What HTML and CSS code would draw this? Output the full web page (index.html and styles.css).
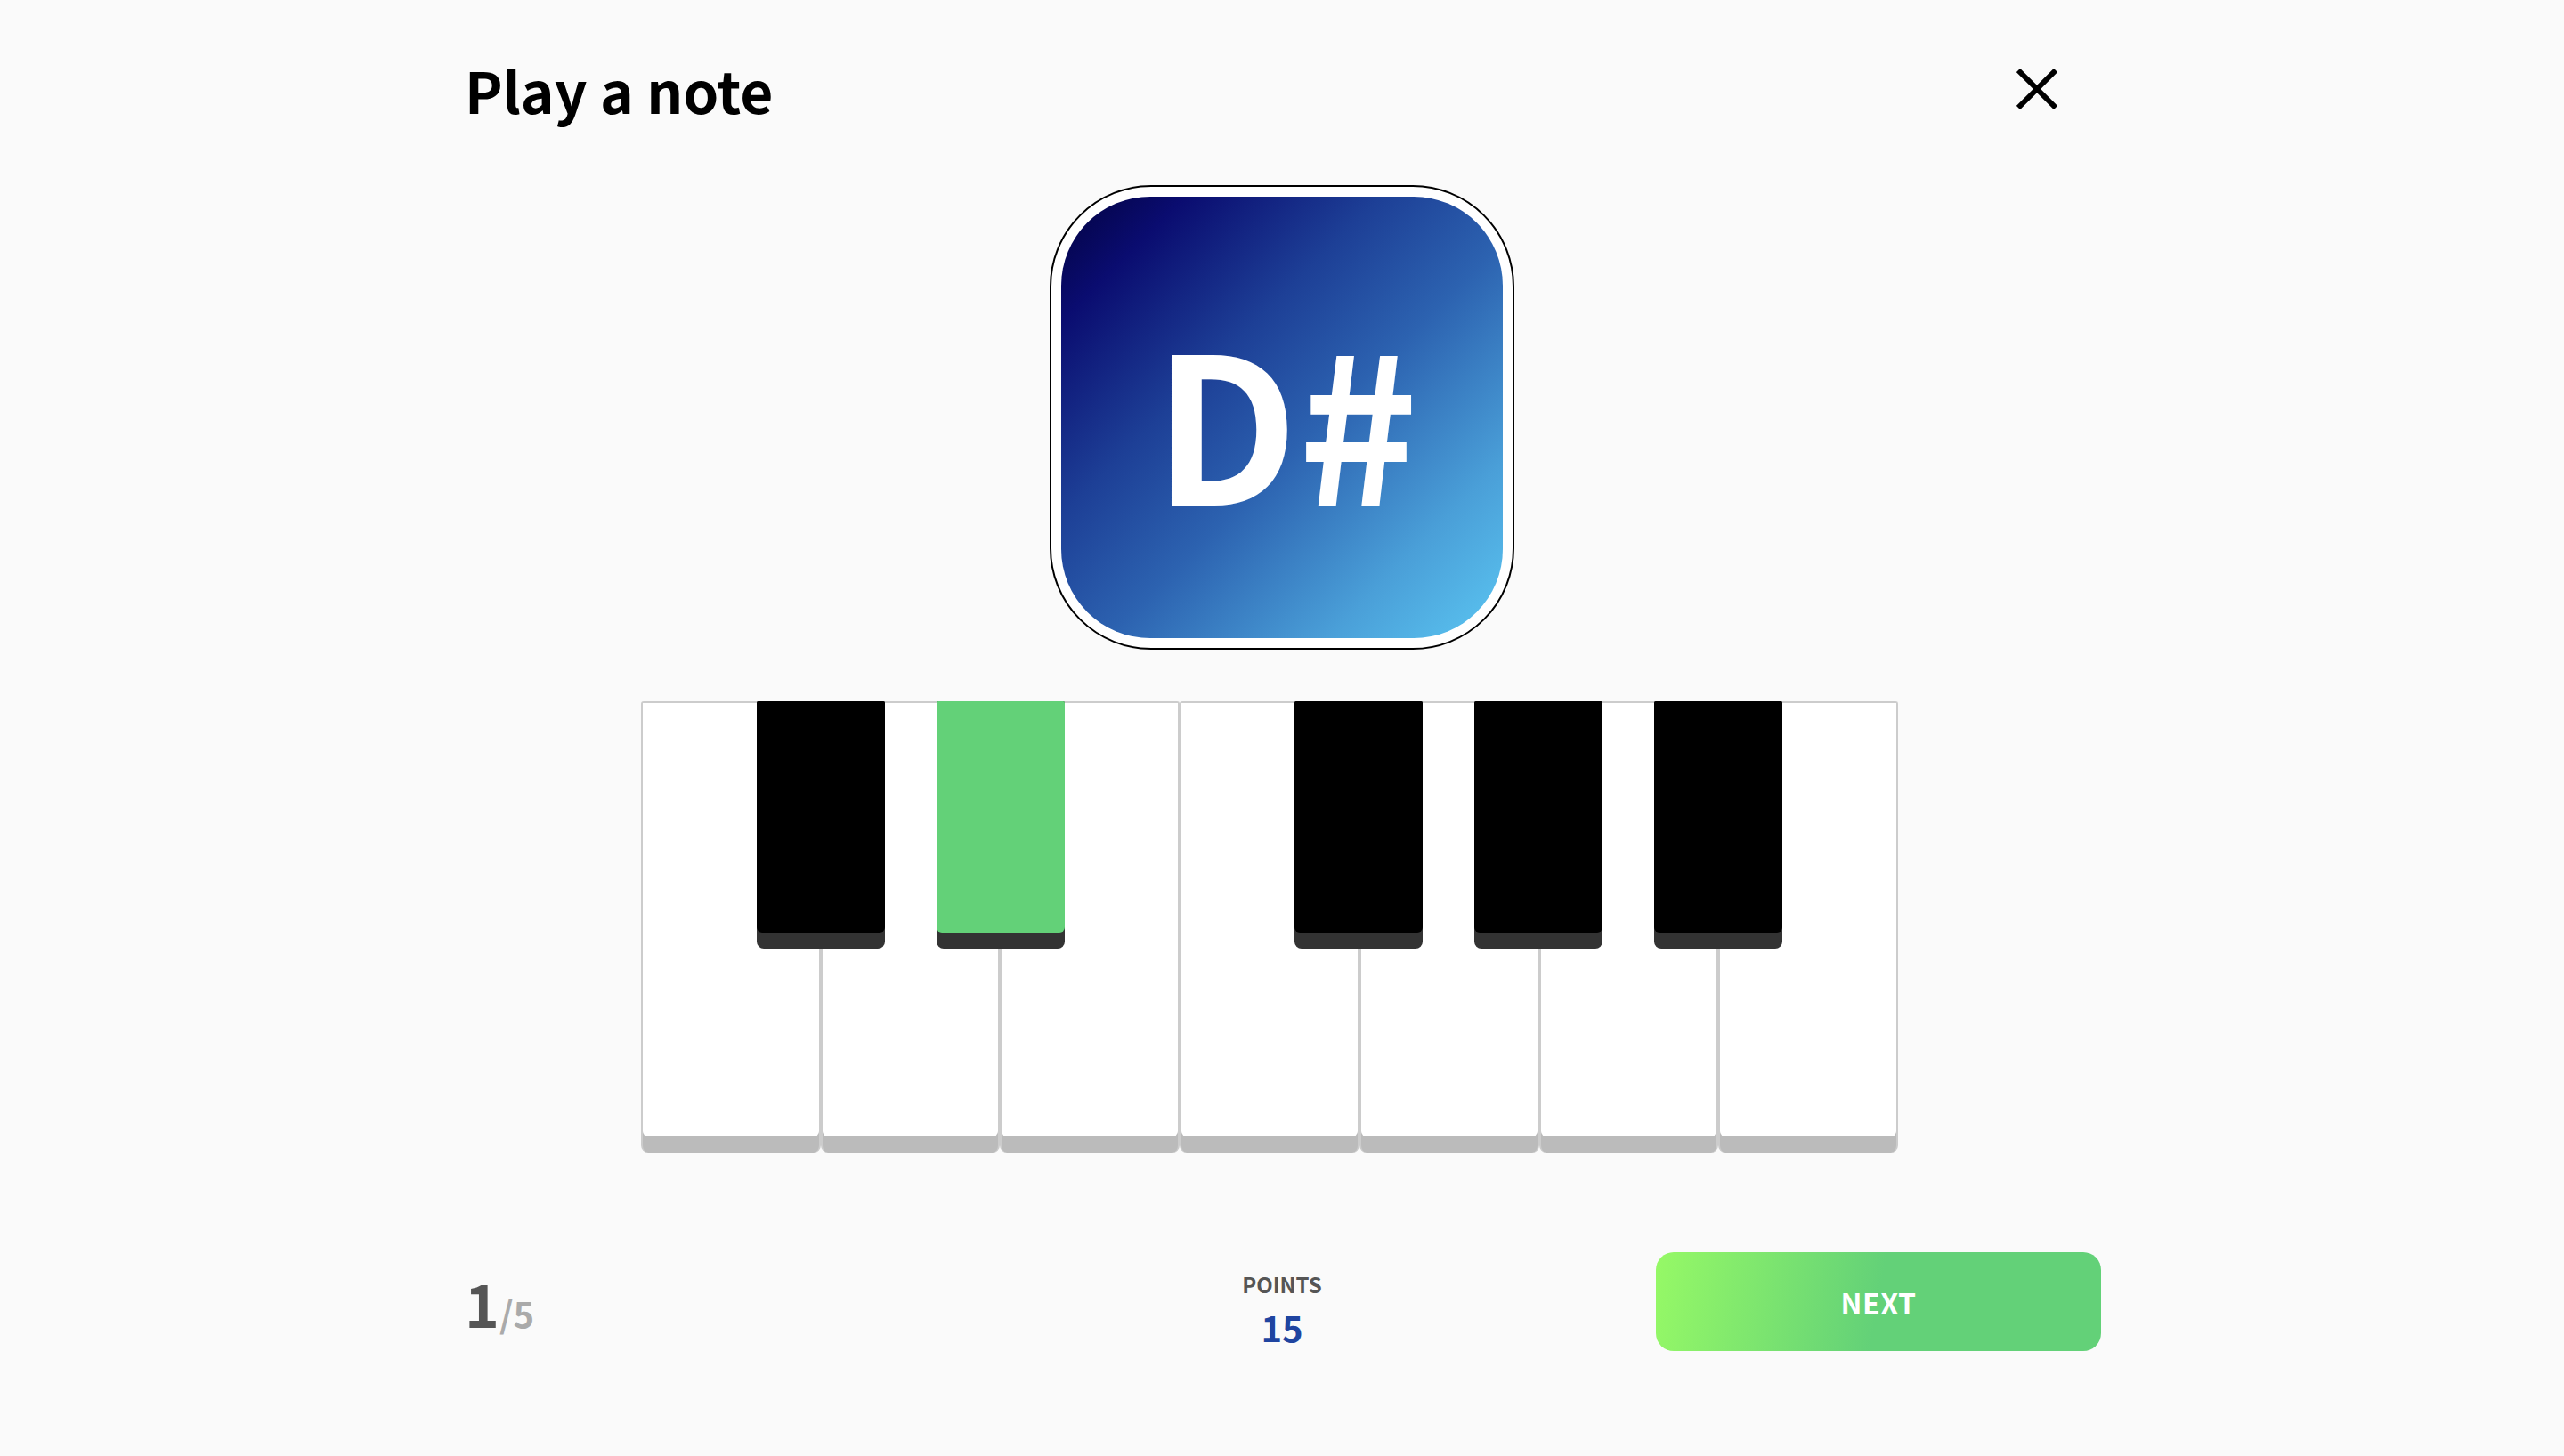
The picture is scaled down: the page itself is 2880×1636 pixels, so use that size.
FILE: index.html
```html
<!DOCTYPE html>
<html lang="en">
<head>
<meta charset="utf-8">
<title>Play a note</title>
<link rel="stylesheet" href="styles.css">
</head>
<body>
<div class="page">
  <header class="header">
    <h1 class="title">Play a note</h1>
    <button class="close" aria-label="Close">
      <svg width="46" height="46" viewBox="0 0 46 46"><path d="M2 2 L44 44 M44 2 L2 44" stroke="#000" stroke-width="6" fill="none"/></svg>
    </button>
  </header>

  <div class="card-wrap">
    <div class="card">
      <div class="card-inner"><span class="note">D#</span></div>
    </div>
  </div>

  <div class="keyboard">
    <div class="wkey"><div class="face"></div></div>
    <div class="wkey"><div class="face"></div></div>
    <div class="wkey"><div class="face"></div></div>
    <div class="wkey"><div class="face"></div></div>
    <div class="wkey"><div class="face"></div></div>
    <div class="wkey"><div class="face"></div></div>
    <div class="wkey"><div class="face"></div></div>
    <div class="bkey bk1"><div class="bface"></div></div>
    <div class="bkey bk2 active"><div class="bface"></div></div>
    <div class="bkey bk3"><div class="bface"></div></div>
    <div class="bkey bk4"><div class="bface"></div></div>
    <div class="bkey bk5"><div class="bface"></div></div>
  </div>

  <footer class="footer">
    <div class="progress"><span class="cur">1</span><span class="total">/5</span></div>
    <div class="points">
      <div class="points-label">POINTS</div>
      <div class="points-value">15</div>
    </div>
    <button class="next">NEXT</button>
  </footer>
</div>
</body>
</html>
```

FILE: styles.css
```css
* { box-sizing: border-box; }
html, body { margin: 0; padding: 0; }
body {
  background: #fafafa;
  font-family: "Noto Sans CJK JP", "Noto Sans", sans-serif;
  color: #000;
}
.page {
  width: 1840px;
  margin: 0 auto;
}
.header {
  display: flex;
  justify-content: space-between;
  align-items: center;
  height: 200px;
}
.title {
  margin: 0 0 0 2px;
  font-size: 64px;
  font-weight: 700;
  line-height: 1;
  color: #000;
}
.close {
  background: none;
  border: 0;
  padding: 0;
  margin-right: 49px;
  width: 46px;
  height: 46px;
  display: flex;
}
.card-wrap {
  display: flex;
  justify-content: center;
  margin-top: 8px;
}
.card {
  width: 522px;
  height: 522px;
  border: 2px solid #000;
  border-radius: 114px;
  background: #fff;
  padding: 11px;
}
.card-inner {
  width: 100%;
  height: 100%;
  border-radius: 100px;
  background: linear-gradient(135deg, #020240 0%, #0a0c70 14%, #1d3f96 36%, #2c62b0 55%, #4a9fd8 80%, #5bc6f2 100%);
  display: flex;
  align-items: center;
  justify-content: center;
}
.note {
  color: #fff;
  font-weight: 700;
  font-size: 228px;
  line-height: 1;
  margin-left: 8px;
}
.keyboard {
  position: relative;
  display: flex;
  width: 1412px;
  height: 507px;
  margin: 58px 0 0 200px;
}
.wkey {
  flex: 1;
  border: 2px solid #cccccc;
  border-bottom: 0;
  border-radius: 3px 3px 8px 8px;
  background: #bbbbbb;
  display: flex;
  flex-direction: column;
}
.face {
  height: 487px;
  background: #fff;
  border-radius: 0 0 6px 6px;
}
.bkey {
  position: absolute;
  top: 0;
  width: 144px;
  height: 278px;
  background: #333333;
  border-radius: 2px 2px 8px 8px;
}
.bface {
  height: 260px;
  background: #000;
  border-radius: 2px 2px 6px 6px;
}
.bkey.active .bface { background: #63d178; }
.bk1 { left: 130px; }
.bk2 { left: 332px; }
.bk3 { left: 734px; }
.bk4 { left: 936px; }
.bk5 { left: 1138px; }

.footer {
  display: grid;
  grid-template-columns: 1fr auto 1fr;
  align-items: center;
  margin-top: 112px;
}
.progress {
  justify-self: start;
  font-weight: 700;
  line-height: 1;
  padding-left: 2px;
}
.cur {
  font-size: 66px;
  color: #555;
}
.total {
  font-size: 40px;
  color: #aaa;
}
.points {
  text-align: center;
  font-weight: 700;
  line-height: 1;
  padding-top: 16px;
}
.points-label {
  font-size: 24px;
  color: #555;
}
.points-value {
  font-size: 40px;
  color: #1f44a0;
  margin-top: 16px;
}
.next {
  justify-self: end;
  width: 500px;
  height: 111px;
  border: 0;
  border-radius: 20px;
  background: linear-gradient(100deg, #96f966 0%, #63d178 50%, #63d178 100%);
  color: #fff;
  font-family: inherit;
  font-weight: 700;
  font-size: 32px;
  letter-spacing: 0.5px;
}
```
